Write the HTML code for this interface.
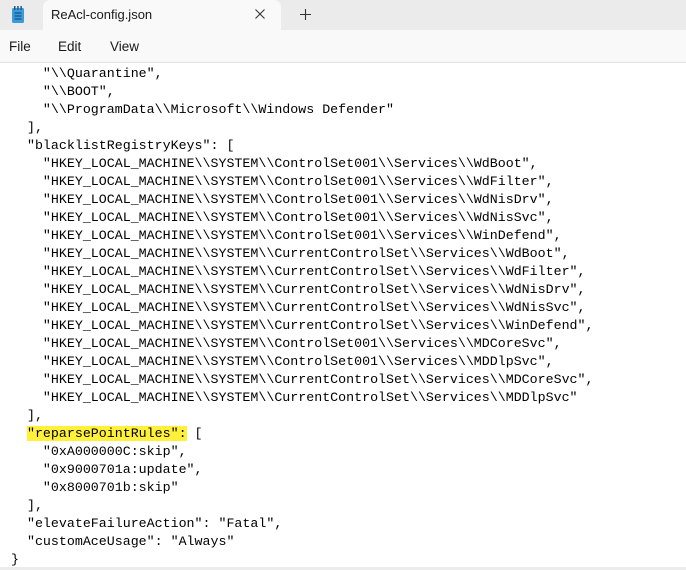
<!DOCTYPE html>
<html><head><meta charset="utf-8"><style>
body{margin:0;width:686px;height:570px;overflow:hidden;background:#fff;font-family:"Liberation Sans",sans-serif;position:relative}
.tabbar{position:absolute;left:0;top:0;width:686px;height:30px;background:#ebebeb}
.tab{position:absolute;left:43px;top:0;width:238px;height:30px;background:#f9f9f9;border-radius:7px 7px 0 0}
.menu{position:absolute;left:0;top:30px;width:686px;height:32px;background:#f9f9f9;border-bottom:1px solid #e3e3e3}
.menu span{position:absolute;top:9px;font-size:13.5px;color:#1a1a1a}
pre{position:absolute;left:11px;top:65px;margin:0;font-family:"Liberation Mono",monospace;font-size:13.3px;line-height:18px;color:#000}
.hl{background:#fff03a}
.bot{position:absolute;left:0;top:567px;width:686px;height:3px;background:#ececec}
</style></head><body>
<div class="tabbar"></div>
<div class="tab">
<svg style="position:absolute;left:-32px;top:6px" width="14" height="18" viewBox="0 0 14 18"><rect x="1" y="2" width="12" height="15" rx="1.5" fill="#3a9bdc"/><rect x="3" y="0" width="1.5" height="4" fill="#245a8a"/><rect x="6.2" y="0" width="1.5" height="4" fill="#245a8a"/><rect x="9.4" y="0" width="1.5" height="4" fill="#245a8a"/><g stroke="#123d66" stroke-width="1"><line x1="3.5" y1="7" x2="10.5" y2="7"/><line x1="3.5" y1="10" x2="10.5" y2="10"/><line x1="3.5" y1="13" x2="10.5" y2="13"/></g></svg>
<span style="position:absolute;left:8px;top:7px;font-size:13px;color:#1a1a1a">ReAcl-config.json</span>
<svg style="position:absolute;left:212px;top:9px" width="10" height="10"><path d="M0.5 0.5L9.5 9.5M9.5 0.5L0.5 9.5" stroke="#333" stroke-width="1.1"/></svg>
</div>
<svg style="position:absolute;left:300px;top:9px" width="11" height="11"><path d="M5.5 0V11M0 5.5H11" stroke="#333" stroke-width="1.1"/></svg>
<div class="menu"><span style="left:9px">File</span><span style="left:58px">Edit</span><span style="left:110px">View</span></div>
<pre>    "\\Quarantine",
    "\\BOOT",
    "\\ProgramData\\Microsoft\\Windows Defender"
  ],
  "blacklistRegistryKeys": [
    "HKEY_LOCAL_MACHINE\\SYSTEM\\ControlSet001\\Services\\WdBoot",
    "HKEY_LOCAL_MACHINE\\SYSTEM\\ControlSet001\\Services\\WdFilter",
    "HKEY_LOCAL_MACHINE\\SYSTEM\\ControlSet001\\Services\\WdNisDrv",
    "HKEY_LOCAL_MACHINE\\SYSTEM\\ControlSet001\\Services\\WdNisSvc",
    "HKEY_LOCAL_MACHINE\\SYSTEM\\ControlSet001\\Services\\WinDefend",
    "HKEY_LOCAL_MACHINE\\SYSTEM\\CurrentControlSet\\Services\\WdBoot",
    "HKEY_LOCAL_MACHINE\\SYSTEM\\CurrentControlSet\\Services\\WdFilter",
    "HKEY_LOCAL_MACHINE\\SYSTEM\\CurrentControlSet\\Services\\WdNisDrv",
    "HKEY_LOCAL_MACHINE\\SYSTEM\\CurrentControlSet\\Services\\WdNisSvc",
    "HKEY_LOCAL_MACHINE\\SYSTEM\\CurrentControlSet\\Services\\WinDefend",
    "HKEY_LOCAL_MACHINE\\SYSTEM\\ControlSet001\\Services\\MDCoreSvc",
    "HKEY_LOCAL_MACHINE\\SYSTEM\\ControlSet001\\Services\\MDDlpSvc",
    "HKEY_LOCAL_MACHINE\\SYSTEM\\CurrentControlSet\\Services\\MDCoreSvc",
    "HKEY_LOCAL_MACHINE\\SYSTEM\\CurrentControlSet\\Services\\MDDlpSvc"
  ],
  <span class="hl">"reparsePointRules":</span> [
    "0xA000000C:skip",
    "0x9000701a:update",
    "0x8000701b:skip"
  ],
  "elevateFailureAction": "Fatal",
  "customAceUsage": "Always"
}</pre>
<div class="bot"></div>
</body></html>
